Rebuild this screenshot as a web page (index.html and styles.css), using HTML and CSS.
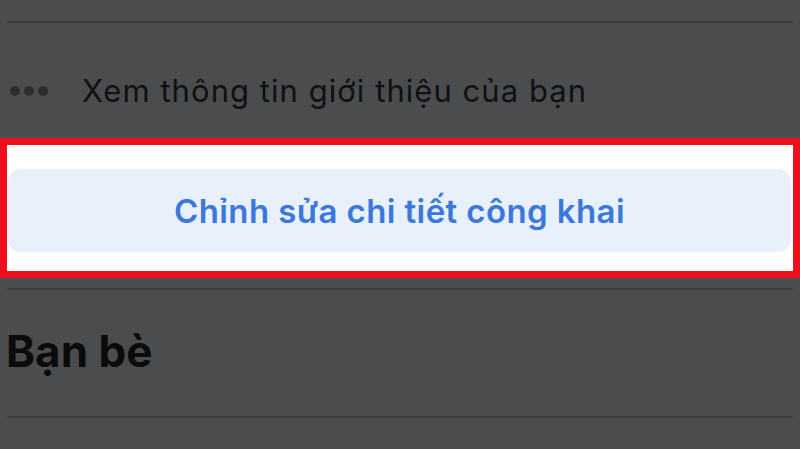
FILE: index.html
```html
<!DOCTYPE html>
<html lang="vi">
<head>
<meta charset="utf-8">
<title>Chỉnh sửa chi tiết công khai</title>
<link rel="stylesheet" href="styles.css">
</head>
<body>
<div class="page">
  <div class="divider divider-top"></div>
  <div class="about-row">
    <span class="dots"><i></i><i></i><i></i></span>
    <span class="about-text">Xem thông tin giới thiệu của bạn</span>
  </div>
  <div class="highlight">
    <div class="edit-btn">Chỉnh sửa chi tiết công khai</div>
  </div>
  <div class="divider divider-mid"></div>
  <h2 class="section-title">Bạn bè</h2>
  <div class="divider divider-bottom"></div>
</div>
</body>
</html>
```
FILE: styles.css
```css
*, *::before, *::after {
  box-sizing: border-box;
}
html, body {
  margin: 0;
  padding: 0;
}
body {
  background: #4b4c4e;
  font-family: Inter, "Noto Sans", "DejaVu Sans", sans-serif;
  width: 800px;
  height: 449px;
  overflow: hidden;
}
.page {
  display: flex;
  flex-direction: column;
}
.divider {
  height: 2px;
  background: #3d3e40;
  margin: 0 7px;
  flex: none;
}
.divider-top {
  margin-top: 21px;
}
.about-row {
  height: 115px;
  padding-top: 20px;
  display: flex;
  align-items: center;
}
.dots {
  display: flex;
  gap: 4px;
  margin-left: 10px;
  width: 72px;
}
.dots i {
  width: 10px;
  height: 10px;
  border-radius: 50%;
  background: #2c2d2f;
  display: block;
}
.about-text {
  font-size: 31px;
  letter-spacing: 1.05px;
  color: #101112;
}
.highlight {
  height: 140px;
  border: 7px solid #ef0f1e;
  background: #ffffff;
  padding: 24px 2px 19px 1px;
  flex: none;
}
.edit-btn {
  height: 83px;
  border-radius: 13px;
  background: #e7f0fb;
  color: #3b78db;
  font-size: 33px;
  font-weight: 600;
  letter-spacing: 0.4px;
  display: flex;
  align-items: center;
  justify-content: center;
}
.divider-mid {
  margin-top: 10px;
}
.section-title {
  margin: 0;
  height: 126px;
  padding-left: 6px;
  padding-bottom: 4px;
  font-size: 44px;
  font-weight: 700;
  color: #0b0b0c;
  display: flex;
  align-items: center;
  line-height: 1;
}
```
